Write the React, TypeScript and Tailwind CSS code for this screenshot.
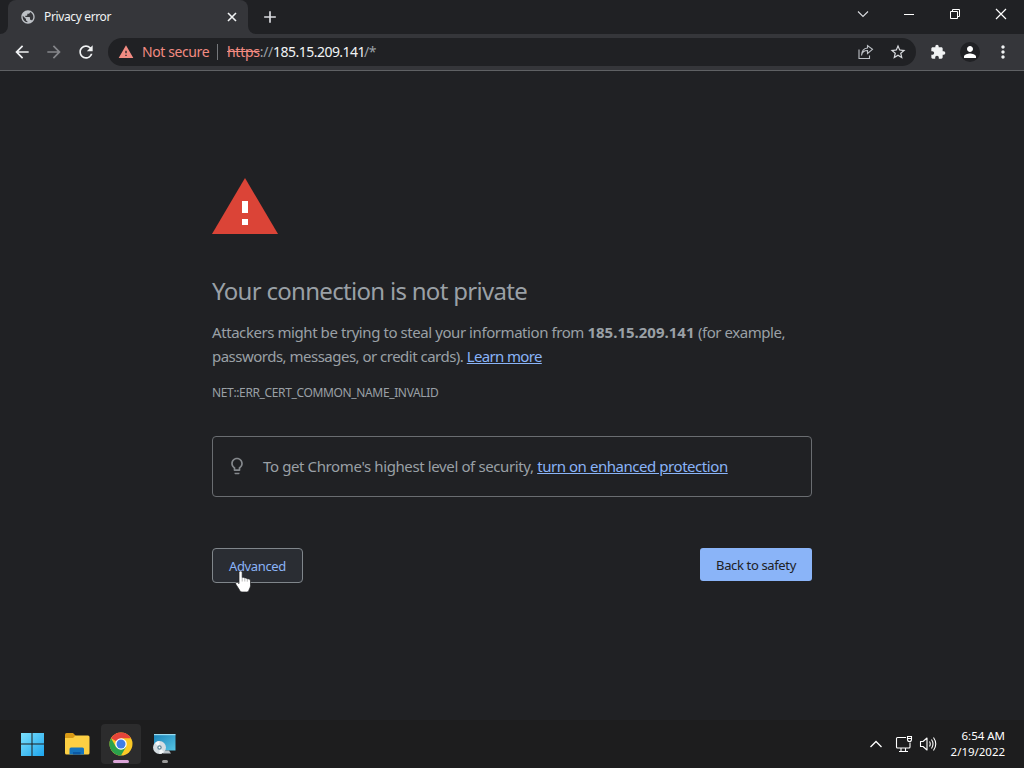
import React from 'react';
import {
  MdAdd,
  MdArrowBack,
  MdArrowForward,
  MdExtension,
  MdLightbulbOutline,
  MdMoreVert,
  MdPerson,
  MdPublic,
  MdRefresh,
  MdStarBorder,
  MdWarning,
} from 'react-icons/md';

const TabStrip: React.FC = () => (
  <div className="flex h-[34px] shrink-0 items-stretch bg-[#202124]">
    <div className="flex w-2 items-end overflow-hidden bg-[#35363a]">
      <div className="h-full w-full rounded-br-lg bg-[#202124]" />
    </div>
    <div className="flex w-60 items-center rounded-t-lg bg-[#35363a] pr-[9px] pl-3">
      <MdPublic className="h-4 w-4 text-[#bdc1c6]" />
      <span className="ml-2 flex-1 text-[12px] tracking-[-0.36px] whitespace-nowrap text-[#f1f3f4]">Privacy error</span>
      <svg className="h-[14px] w-[14px]" viewBox="0 0 14 14" fill="none" stroke="#f1f3f4" strokeWidth="1.6">
        <path d="M3 3l8 8M11 3l-8 8" />
      </svg>
    </div>
    <div className="w-2 bg-[#35363a]">
      <div className="h-full w-full rounded-bl-lg bg-[#202124]" />
    </div>
    <div className="flex w-7 items-center justify-center">
      <MdAdd className="h-5 w-5 text-[#dadce0]" />
    </div>
    <div className="ml-auto flex w-[184px] items-center">
      <svg className="h-7 w-[46px]" viewBox="0 0 46 28" fill="none" stroke="#dadce0" strokeWidth="1.1">
        <path d="M18 8.500l5 5 5-5" />
      </svg>
      <svg className="h-7 w-[46px]" viewBox="0 0 46 28" fill="none" stroke="#fff" shapeRendering="crispEdges">
        <path d="M18 11.500h10" />
      </svg>
      <svg className="h-7 w-[46px]" viewBox="0 0 46 28" fill="none" stroke="#fff">
        <path d="M18.500 8.500h7v7h-7zM20.500 8.500v-2h7v7h-2" />
      </svg>
      <svg className="h-7 w-[46px]" viewBox="0 0 46 28" fill="none" stroke="#fff" strokeWidth="1.2">
        <path d="M18 6l10 10M28 6l-10 10" />
      </svg>
    </div>
  </div>
);

const Toolbar: React.FC = () => (
  <div className="flex h-[37px] shrink-0 items-center border-b border-[#5f6164] bg-[#35363a] pl-3">
    <MdArrowBack className="h-5 w-5 text-[#f1f3f4]" />
    <MdArrowForward className="ml-3 h-5 w-5 text-[#85868a]" />
    <MdRefresh className="ml-3 h-5 w-5 text-[#f1f3f4]" />
    <div className="ml-3 flex h-7 w-[808px] items-center rounded-full bg-[#202124] pr-[9px] pl-[10px] text-[14px] whitespace-nowrap">
      <MdWarning className="h-4 w-4 text-[#f28b82]" />
      <span className="ml-2 w-[67px] pb-px tracking-[-0.4px] text-[#f28b82]">Not secure</span>
      <span className="ml-2 h-4 w-px bg-[#75777b]" />
      <span className="ml-[9px] w-[46px] pb-px tracking-[-0.28px] text-[#9aa0a6]">
        <span className="text-[#f28b82] line-through">https</span>://
      </span>
      <span className="w-[91px] pb-px tracking-[-0.52px] text-[#f1f3f4]">185.15.209.141</span>
      <span className="pb-px tracking-[-0.5px] text-[#9aa0a6]">/*</span>
      <svg className="ml-auto h-4 w-4" viewBox="0 0 16 16" fill="none" stroke="#bdc1c6" strokeWidth="1.1">
        <path d="M1 5.500v9h10.500v-3M3.500 11.500C4 8 6.200 6.500 9.500 6.500V9.500L14.500 5.300L9.500 1.500V4C5.500 4.300 3.700 7 3.500 11.500z" />
      </svg>
      <MdStarBorder className="ml-[15px] h-[18px] w-[18px] text-[#dadce0]" />
    </div>
    <MdExtension className="ml-3.5 h-4 w-4 text-[#f1f3f4]" />
    <span className="ml-3.5 flex h-5 w-5 items-center justify-center rounded-full bg-[#202124]">
      <MdPerson className="h-[18px] w-[18px] text-white" />
    </span>
    <MdMoreVert className="ml-[12.5px] h-5 w-5 text-[#f1f3f4]" />
  </div>
);

const Pointer: React.FC = () => (
  <svg className="absolute top-[21px] left-[22px] h-[23px] w-[17px]" viewBox="0 0 17 23">
    <path
      d="M5.500 1C6.500 1 7.200 1.700 7.200 2.600V7.500C8.200 7 9.300 7.300 9.700 8.100C10.700 7.600 11.800 8 12.200 8.900C13.700 8.500 15.500 9.300 15.500 11V15.500C15.500 17.500 14.500 18.500 14 20C13.600 21.500 12.700 22 11.500 22H7C5.500 22 5 21 4.500 20L1 14.500C0 12.800 1.600 11.600 2.900 12.600L4 13.600V2.600C4 1.700 4.600 1 5.500 1z"
      fill="#fff"
      stroke="#202124"
      strokeWidth="0.7"
    />
    <path d="M7.200 7.500v4M9.800 8.300v3.200M12.300 9v2.700" stroke="#8b8b8b" strokeWidth="0.6" fill="none" />
  </svg>
);

const WarningPage: React.FC = () => (
  <main className="flex-1 px-[212px] pt-[106px] text-[#9aa0a6]">
    <svg className="h-[57px] w-[66px]" viewBox="0 0 66 57">
      <path d="M33 1L66 57H0z" fill="#db4437" />
      <path d="M30 24h6v12h-6zM30 42h6v6h-6z" fill="#fff" />
    </svg>
    <h1 className="mt-[42px] text-[24px] leading-[30px] tracking-[-0.7px] whitespace-nowrap">
      Your connection is not private
    </h1>
    <p className="mt-[14px] text-[15px] leading-6 whitespace-nowrap">
      <span className="block tracking-[-0.43px]">
        Attackers might be trying to steal your information from{' '}
        <b className="tracking-[0px]">185.15.209.141</b>
        <span className="tracking-[-0.45px]"> (for example,</span>
      </span>
      <span className="block tracking-[-0.51px]">
        passwords, messages, or credit cards).{' '}
        <a className="tracking-[-0.65px] text-[#8ab4f8] underline">Learn more</a>
      </span>
    </p>
    <div className="mt-4 text-[12px] leading-[18px] tracking-[-0.36px]">NET::ERR_CERT_COMMON_NAME_INVALID</div>
    <div className="mt-[34px] flex h-[61px] w-[600px] items-center rounded border border-[#6a6d71] pl-[14px]">
      <MdLightbulbOutline className="mb-0.5 h-5 w-5 text-[#85898d]" />
      <p className="ml-4 text-[15px] tracking-[-0.38px] whitespace-nowrap">
        To get Chrome's highest level of security,{' '}
        <a className="tracking-[-0.45px] text-[#8ab4f8] underline">turn on enhanced protection</a>
      </p>
    </div>
    <div className="mt-[51px] flex w-[600px] items-start justify-between text-[13px] tracking-[-0.36px]">
      <button className="relative h-[35px] w-[91px] rounded border border-[#80868b] bg-[#2a2d33] pt-[3px] text-[#8ab4f8]">
        Advanced
        <Pointer />
      </button>
      <button className="h-[33px] w-28 rounded-[3px] bg-[#8ab4f8] pt-[3px] text-[#202124]">Back to safety</button>
    </div>
  </main>
);

const WindowsLogo: React.FC = () => (
  <svg className="h-6 w-6" viewBox="0 0 24 24">
    <defs>
      <linearGradient id="win" x1="0" y1="0" x2="1" y2="1" gradientUnits="objectBoundingBox">
        <stop offset="0" stopColor="#7ce0fb" />
        <stop offset="1" stopColor="#1da5ee" />
      </linearGradient>
    </defs>
    <path d="M1 1h10.500v10.500H1zM12.500 1H24v10.500H12.500zM1 12.500h10.500V24H1zM12.500 12.500H24V24H12.500z" fill="url(#win)" />
  </svg>
);

const FolderIcon: React.FC = () => (
  <svg className="h-6 w-[26px]" viewBox="0 0 26 24">
    <path d="M1 2.500Q1 1 2.500 1H9l2.500 2.500V8H1z" fill="#d99a16" />
    <path d="M1 6h8l2.500-2.500H24Q25.500 3.500 25.500 5V21Q25.500 22.500 24 22.500H2.500Q1 22.500 1 21z" fill="#fdcf43" />
    <path d="M5.500 22.500V17Q5.500 15.500 7 15.500H18.500Q20 15.500 20 17V22.500z" fill="#1674bd" />
    <path d="M9 22.500v-2.500h7.500v2.500z" fill="#0c59a4" />
  </svg>
);

const ChromeIcon: React.FC = () => (
  <svg className="h-6 w-6" viewBox="0 0 24 24">
    <circle cx="12" cy="12" r="11.500" fill="#fbc926" />
    <path d="M12 12L2.040 6.250A11.500 11.500 0 0 1 21.960 6.250H12z" fill="#e6453a" />
    <path d="M2.040 6.250A11.500 11.500 0 0 0 12 23.500L16.980 14.880H12L7.020 14.880z" fill="#2ba24c" />
    <circle cx="12" cy="12" r="5.750" fill="#fff" />
    <circle cx="12" cy="12" r="4.500" fill="#3f7de8" />
  </svg>
);

const SetupIcon: React.FC = () => (
  <svg className="h-6 w-6" viewBox="0 0 24 24">
    <defs>
      <linearGradient id="screen" x1="0" y1="0" x2="1" y2="1">
        <stop offset="0" stopColor="#1b83b8" />
        <stop offset="1" stopColor="#55c4e4" />
      </linearGradient>
    </defs>
    <path d="M2 2.500h21.500v16H2z" fill="url(#screen)" />
    <path d="M2 2h21.500v1.200H2z" fill="#9adcf0" />
    <path d="M11 18.500h6l2 3h-8z" fill="#b9c1c7" />
    <circle cx="7.500" cy="15.500" r="6.500" fill="#d5dde2" />
    <path d="M7.500 15.500L3 11A6.500 6.500 0 0 1 7.500 9zM7.500 15.500L12 20A6.500 6.500 0 0 1 7.500 22z" fill="#f5f8fa" />
    <circle cx="7.500" cy="15.500" r="2.200" fill="#5f8799" />
    <circle cx="7.500" cy="15.500" r="1" fill="#fff" />
  </svg>
);

const Taskbar: React.FC = () => (
  <footer className="flex h-12 shrink-0 items-center bg-[#1d1d1e] pr-[19px] pl-5">
    <WindowsLogo />
    <div className="ml-5">
      <FolderIcon />
    </div>
    <div className="relative ml-[11px] flex h-10 w-10 items-center justify-center rounded bg-[#2c2c2d]">
      <ChromeIcon />
      <span className="absolute bottom-px left-3 h-[3px] w-4 rounded-full bg-[#dba5d8]" />
    </div>
    <div className="relative ml-[11px]">
      <SetupIcon />
      <span className="absolute -bottom-[7px] left-[10px] h-[3px] w-1.5 rounded-full bg-[#9a9a9a]" />
    </div>
    <div className="ml-auto flex items-center text-white">
      <svg className="h-3 w-[14px]" viewBox="0 0 14 12" fill="none" stroke="currentColor" strokeWidth="1.3">
        <path d="M1.500 9L7 3.500L12.500 9" />
      </svg>
      <svg className="ml-3 h-[18px] w-[18px]" viewBox="0 0 18 18" fill="none" stroke="currentColor" strokeWidth="1.100">
        <path d="M11 2.500H2.500Q1.500 2.500 1.500 3.500V12Q1.500 13 2.500 13H14Q15 13 15 12V7.500M6 13v3.500M10.500 13v3.500M4 16.500h9M12.500 1.500h4v3q0 2-2 2t-2-2zM12.500 3.500h4" />
      </svg>
      <svg className="ml-1.5 h-[18px] w-[18px]" viewBox="0 0 18 18" fill="none" stroke="currentColor" strokeWidth="1.100" strokeLinejoin="round">
        <path d="M1.500 6.500H4L8 3V15L4 11.500H1.500zM10.500 6.500Q12 9 10.500 11.500M12.500 4.500Q15.500 9 12.500 13.500M14.500 2.500Q19 9 14.500 15.500" />
      </svg>
      <div className="ml-[13px] w-[55px] text-right text-[11.5px] leading-4 tracking-[-0.02px] whitespace-nowrap">
        <div>6:54 AM</div>
        <div>2/19/2022</div>
      </div>
    </div>
  </footer>
);

const App: React.FC = () => {
  return (
    <div className="flex h-[768px] w-[1024px] flex-col overflow-hidden bg-[#202124] font-['Noto_Sans',sans-serif]">
      <TabStrip />
      <Toolbar />
      <WarningPage />
      <Taskbar />
    </div>
  );
};

export default App;
